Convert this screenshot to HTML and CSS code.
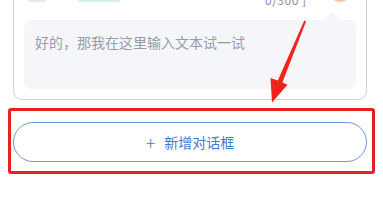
FILE: index.html
```html
<!DOCTYPE html>
<html lang="zh">
<head>
<meta charset="utf-8">
<link rel="stylesheet" href="styles.css">
</head>
<body>
<div class="page">
  <div class="card">
    <div class="top-row">
      <span class="chip chip-gray"></span>
      <span class="chip chip-teal"></span>
      <span class="count">0/300 ]</span>
      <span class="avatar"></span>
    </div>
    <div class="bubble">
      <span class="tail"></span>
      <p class="bubble-text">好的，那我在这里输入文本试一试</p>
    </div>
  </div>
  <button class="add-btn"><span class="plus">+</span>新增对话框</button>
  <div class="mark-box"></div>
  <svg class="arrow" width="383" height="211" viewBox="0 0 383 211">
    <polygon points="304.3,20.6 306,21.4 282.4,82.6 287.5,84.8 272,102.5 270.5,78 277.8,80.6" fill="#f2221c"/>
  </svg>
</div>
</body>
</html>
```
FILE: styles.css
```css
* { box-sizing: border-box; }
html, body { margin: 0; padding: 0; background: #ffffff; }
body { font-family: "Noto Sans CJK SC", "Noto Sans", sans-serif; width: 383px; height: 211px; overflow: hidden; }
.page { position: relative; width: 383px; height: 211px; }
.card {
  margin: 0 16px 0 13px;
  border: 1px solid #ccd0db;
  border-top: none;
  border-radius: 0 0 9px 9px;
  padding: 0 10px 10px 10px;
}
.top-row {
  display: flex;
  align-items: flex-end;
  height: 4px;
  position: relative;
}
.chip { display: block; height: 10px; border-radius: 4px; }
.chip-gray { width: 20px; margin-left: 3px; background: #e6e8ed; height: 12px; margin-bottom: 2px; }
.chip-teal { width: 44px; margin-left: 30px; background: #d5efe9; height: 12px; margin-bottom: 2px; }
.count {
  margin-left: 144px;
  font-size: 12px;
  line-height: 12px;
  color: #8a8d93;
  margin-bottom: -2px;
  letter-spacing: 0.5px;
}
.avatar {
  width: 22px; height: 22px; border-radius: 50%;
  background: #f4c3a6;
  margin-left: 22px;
  margin-bottom: 2px;
}
.bubble {
  position: relative;
  margin-top: 16px;
  height: 69px;
  background: #f5f6fa;
  border-radius: 7px;
  padding: 12px 11px;
}
.tail {
  position: absolute;
  top: -8px; right: 16px;
  width: 0; height: 0;
  border-left: 8px solid transparent;
  border-right: 8px solid transparent;
  border-bottom: 8px solid #f5f6fa;
}
.bubble-text {
  margin: 0;
  font-size: 14px;
  line-height: 20px;
  color: #9a9ca2;
}
.add-btn {
  display: flex;
  align-items: center;
  justify-content: center;
  margin: 22px 16px 0 13px;
  width: 354px;
  height: 40px;
  border: 1px solid #6f9ad6;
  border-radius: 20px;
  background: #ffffff;
  font-family: "Noto Sans CJK SC", "Noto Sans", sans-serif;
  font-size: 14px;
  color: #3f7bd1;
  padding: 0;
}
.plus { font-size: 18px; font-weight: 300; margin-right: 9px; line-height: 20px; }
.mark-box {
  position: absolute;
  left: 8px; top: 108px;
  width: 367px; height: 66px;
  border: 3px solid #e8221c;
  border-radius: 3px;
}
.arrow { position: absolute; left: 0; top: 0; }
```
